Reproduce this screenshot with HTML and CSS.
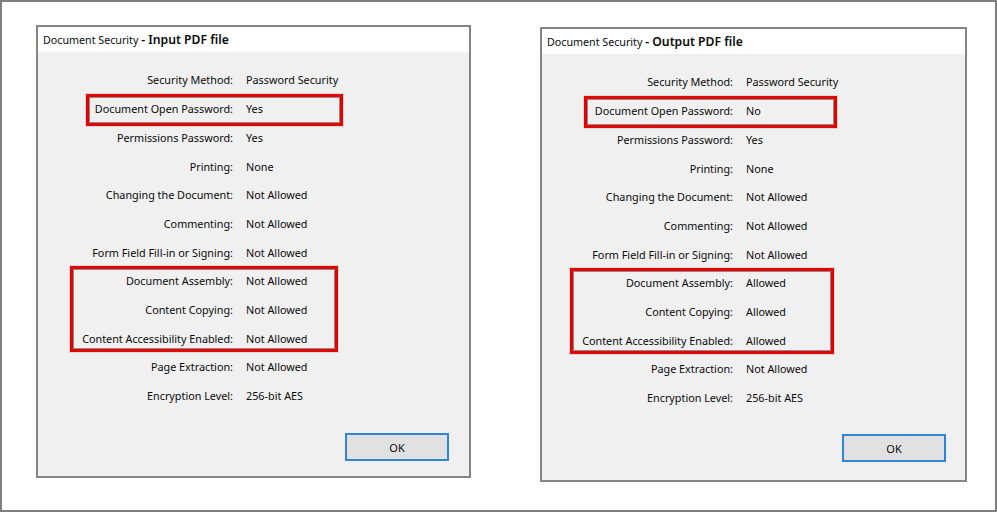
FILE: index.html
```html
<!DOCTYPE html>
<html>
<head>
<meta charset="utf-8">
<link rel="stylesheet" href="styles.css">
</head>
<body>
<div class="frame">
  <div class="dialog dialog-in">
    <div class="titlebar"><span class="title-text"><span class="t-main">Document Security</span> <span class="t-sub">- Input PDF file</span></span></div>
    <div class="body">
      <div class="rows">
        <div class="row"><span class="label">Security Method:</span><span class="value">Password Security</span></div>
        <div class="box box-single box-open">
          <div class="row"><span class="label">Document Open Password:</span><span class="value">Yes</span></div>
        </div>
        <div class="row"><span class="label">Permissions Password:</span><span class="value">Yes</span></div>
        <div class="row"><span class="label">Printing:</span><span class="value">None</span></div>
        <div class="row"><span class="label">Changing the Document:</span><span class="value">Not Allowed</span></div>
        <div class="row"><span class="label">Commenting:</span><span class="value">Not Allowed</span></div>
        <div class="row"><span class="label">Form Field Fill-in or Signing:</span><span class="value">Not Allowed</span></div>
        <div class="box box-group">
          <div class="row"><span class="label">Document Assembly:</span><span class="value">Not Allowed</span></div>
          <div class="row"><span class="label">Content Copying:</span><span class="value">Not Allowed</span></div>
          <div class="row"><span class="label">Content Accessibility Enabled:</span><span class="value">Not Allowed</span></div>
        </div>
        <div class="row"><span class="label">Page Extraction:</span><span class="value">Not Allowed</span></div>
        <div class="row"><span class="label">Encryption Level:</span><span class="value">256-bit AES</span></div>
      </div>
      <div class="footer"><button class="ok">OK</button></div>
    </div>
  </div>

  <div class="dialog dialog-out">
    <div class="titlebar"><span class="title-text"><span class="t-main">Document Security</span> <span class="t-sub">- Output PDF file</span></span></div>
    <div class="body">
      <div class="rows">
        <div class="row"><span class="label">Security Method:</span><span class="value">Password Security</span></div>
        <div class="box box-single box-open">
          <div class="row"><span class="label">Document Open Password:</span><span class="value">No</span></div>
        </div>
        <div class="row"><span class="label">Permissions Password:</span><span class="value">Yes</span></div>
        <div class="row"><span class="label">Printing:</span><span class="value">None</span></div>
        <div class="row"><span class="label">Changing the Document:</span><span class="value">Not Allowed</span></div>
        <div class="row"><span class="label">Commenting:</span><span class="value">Not Allowed</span></div>
        <div class="row"><span class="label">Form Field Fill-in or Signing:</span><span class="value">Not Allowed</span></div>
        <div class="box box-group">
          <div class="row"><span class="label">Document Assembly:</span><span class="value">Allowed</span></div>
          <div class="row"><span class="label">Content Copying:</span><span class="value">Allowed</span></div>
          <div class="row"><span class="label">Content Accessibility Enabled:</span><span class="value">Allowed</span></div>
        </div>
        <div class="row"><span class="label">Page Extraction:</span><span class="value">Not Allowed</span></div>
        <div class="row"><span class="label">Encryption Level:</span><span class="value">256-bit AES</span></div>
      </div>
      <div class="footer"><button class="ok">OK</button></div>
    </div>
  </div>
</div>
</body>
</html>
```
FILE: styles.css
```css
* { box-sizing: border-box; }
html, body { margin: 0; padding: 0; background: #fff; }
body {
  font-family: "Noto Sans", "Open Sans", sans-serif;
  font-size: 10.8px;
  color: #0a0a0a;
}
.frame {
  width: 997px;
  height: 512px;
  border: 2px solid #7f7f7f;
  background: #fff;
  display: flex;
  align-items: flex-start;
}
.dialog {
  border: 2px solid #858585;
  background: #f0f0f0;
  display: flex;
  flex-direction: column;
}
.dialog-in {
  width: 435px;
  height: 453px;
  margin: 23px 0 0 34px;
  --lw: 195px;
  --open-ml: 48px;
  --open-w: 257px;
  --open-lw: 144px;
  --grp-ml: 32px;
  --grp-w: 268px;
  --grp-lw: 160px;
  --ok-mr: 20px;
  --ok-mb: 15px;
}
.dialog-out {
  width: 427px;
  height: 455px;
  margin: 25px 0 0 69px;
  --lw: 191px;
  --open-ml: 42px;
  --open-w: 253px;
  --open-lw: 146px;
  --grp-ml: 28px;
  --grp-w: 264px;
  --grp-lw: 160px;
  --ok-mr: 19px;
  --ok-mb: 18px;
}
.titlebar {
  height: 25px;
  background: #fff;
  padding: 0 0 0 5px;
  display: flex;
  align-items: center;
}
.title-text { white-space: pre; }
.t-main { font-size: 10.7px; }
.t-sub {
  font-weight: 600;
  font-size: 12.2px;
}
.body {
  flex: 1;
  display: flex;
  flex-direction: column;
  justify-content: space-between;
  padding-top: 13.6px;
}
.rows { display: flex; flex-direction: column; }
.row {
  height: 28.7px;
  display: flex;
  align-items: center;
}
.label {
  width: var(--lw);
  flex: none;
  text-align: right;
  white-space: nowrap;
}
.value {
  margin-left: 13px;
  white-space: nowrap;
}
.box {
  border: 3px solid #e60000;
  box-shadow: inset 0 0 0 1px #8a8a8a, 0 0 0 1px #d8d8d8;
}
.box > .row:first-child { margin-top: -3px; }
.box-single { margin-bottom: -3px; }
.box-group > .row:last-child { margin-bottom: -3px; }
.box-open {
  margin-left: var(--open-ml);
  width: var(--open-w);
}
.box-open .label { width: var(--open-lw); }
.box-group {
  margin-left: var(--grp-ml);
  width: var(--grp-w);
}
.box-group .label { width: var(--grp-lw); }
.footer {
  display: flex;
  justify-content: flex-end;
  padding: 0 var(--ok-mr) var(--ok-mb) 0;
}
.ok {
  width: 104px;
  height: 28px;
  border: 2px solid #2f86d6;
  background: #e1e1e1;
  font-family: inherit;
  font-size: 11px;
  color: #0a0a0a;
  padding: 0;
}
```
